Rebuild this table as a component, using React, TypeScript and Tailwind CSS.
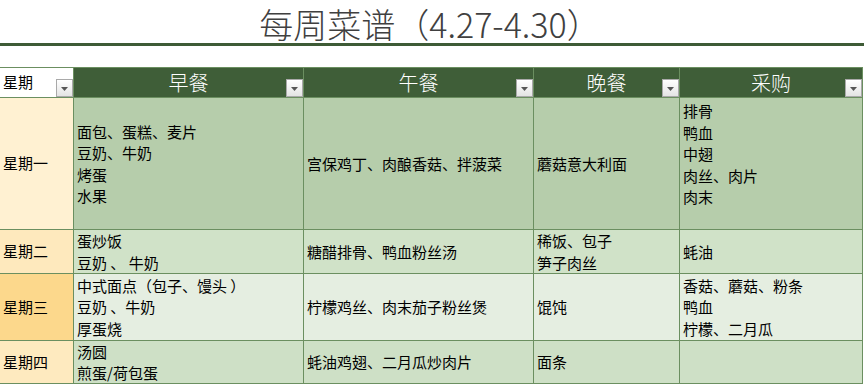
import React from "react";

type Row = {
    day: string;
    dayBg: string;
    cellBg: string;
    breakfast: string[];
    lunch: string[];
    dinner: string[];
    shopping: string[];
    shoppingTop?: boolean;
};

const rows: Row[] = [
    {
        day: "星期一",
        dayBg: "bg-[#fff1d2]",
        cellBg: "bg-[#b6cdab]",
        breakfast: ["面包、蛋糕、麦片", "豆奶、牛奶", "烤蛋", "水果"],
        lunch: ["宫保鸡丁、肉酿香菇、拌菠菜"],
        dinner: ["蘑菇意大利面"],
        shopping: ["排骨", "鸭血", "中翅", "肉丝、肉片", "肉末"],
        shoppingTop: true,
    },
    {
        day: "星期二",
        dayBg: "bg-[#fee9bd]",
        cellBg: "bg-[#d0e2c8]",
        breakfast: ["蛋炒饭", "豆奶 、 牛奶"],
        lunch: ["糖醋排骨、鸭血粉丝汤"],
        dinner: ["稀饭、包子", "笋子肉丝"],
        shopping: ["蚝油"],
    },
    {
        day: "星期三",
        dayBg: "bg-[#fcd88c]",
        cellBg: "bg-[#e5eee1]",
        breakfast: ["中式面点（包子、馒头 ）", "豆奶 、牛奶", "厚蛋烧"],
        lunch: ["柠檬鸡丝、肉末茄子粉丝煲"],
        dinner: ["馄饨"],
        shopping: ["香菇、蘑菇、粉条", "鸭血", "柠檬、二月瓜"],
    },
    {
        day: "星期四",
        dayBg: "bg-[#feeabf]",
        cellBg: "bg-[#cee0c6]",
        breakfast: ["汤圆", "煎蛋/荷包蛋"],
        lunch: ["蚝油鸡翅、二月瓜炒肉片"],
        dinner: ["面条"],
        shopping: [],
    },
];

// little excel filter button
const FilterButton: React.FC = () => (
    <div className="absolute right-0 bottom-0 w-[17px] h-[18px] border border-[#a9a9a9] bg-gradient-to-b from-white to-[#e4e4e4] flex items-center justify-center">
        <svg width="7" height="4" viewBox="0 0 7 4" className="mt-[2px]">
            <path d="M0 0 H7 L3.5 4 Z" fill="#555" />
        </svg>
    </div>
);

const Cell: React.FC<{lines: string[]; bg: string; top?: boolean}> = ({lines, bg, top}) => (
    <div className={`${bg} flex flex-col ${top ? "justify-start pt-[2px]" : "justify-center"} px-[3px] overflow-hidden`}>
        {lines.map((l, i) => (
            <div key={i} className="leading-[21.5px] whitespace-pre">
                {l}
            </div>
        ))}
    </div>
);

export default function App() {
    return (
        <div
            className="w-[864px] h-[384px] bg-white overflow-hidden text-black"
            style={{fontFamily: '"Noto Sans CJK SC", "Noto Sans", sans-serif'}}>
            {/* title */}
            <div className="flex justify-center pr-[4px] -mb-[5px]">
                <h1 className="text-[34px] font-light text-[#404040] leading-[48px] whitespace-nowrap">
                    每周菜谱（4.27-4.30）
                </h1>
            </div>
            <div className="relative h-[3px] bg-[#3e5b36]" />

            <div className="mt-[21px] w-[863px] grid grid-cols-[73px_229px_229px_145px_182px] grid-rows-[29px_131px_43px_66px_42px] gap-px bg-[#6b8f60] pt-px pr-px pb-px text-[15px]">
                {/* header */}
                <div className="relative bg-white flex items-center px-[3px]">
                    <span>星期</span>
                    <FilterButton />
                </div>
                {["早餐", "午餐", "晚餐", "采购"].map((h) => (
                    <div key={h} className="relative bg-[#3f5e38] flex items-center justify-center">
                        <span className="text-white text-[20px] font-light leading-[26px]">{h}</span>
                        <FilterButton />
                    </div>
                ))}

                {rows.map((r) => (
                    <React.Fragment key={r.day}>
                        <div className={`${r.dayBg} flex items-center px-[3px]`}>{r.day}</div>
                        <Cell lines={r.breakfast} bg={r.cellBg} />
                        <Cell lines={r.lunch} bg={r.cellBg} />
                        <Cell lines={r.dinner} bg={r.cellBg} />
                        <Cell lines={r.shopping} bg={r.cellBg} top={r.shoppingTop} />
                    </React.Fragment>
                ))}
            </div>
        </div>
    );
}
